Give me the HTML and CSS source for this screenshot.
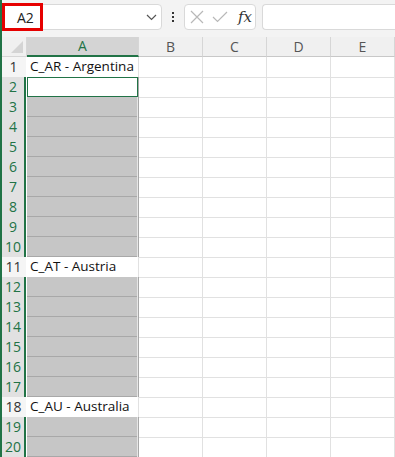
FILE: index.html
```html
<!DOCTYPE html>
<html lang="en">

<head>
    <meta charset="UTF-8">
    <title>Sheet</title>
    <link rel="stylesheet" href="styles.css">
</head>

<body>
    <div class="app">
        <div class="toolbar">
            <div class="name-box">
                <span class="name-text">A2</span>
                <svg class="chevron" width="11" height="7" viewBox="0 0 11 7"><path d="M1 1 L5.5 5.5 L10 1" fill="none" stroke="#555" stroke-width="1.2"/></svg>
                <div class="highlight"></div>
            </div>
            <div class="dots"><span></span><span></span><span></span></div>
            <div class="fx-box">
                <svg width="14" height="14" viewBox="0 0 14 14"><path d="M1 1 L13 13 M13 1 L1 13" stroke="#b8b8b8" stroke-width="1.2" fill="none"/></svg>
                <svg width="16" height="12" viewBox="0 0 16 12"><path d="M1 6 L5.5 10.5 L15 1" stroke="#b8b8b8" stroke-width="1.2" fill="none"/></svg>
                <span class="fx">fx</span>
            </div>
            <div class="formula"></div>
        </div>

        <div class="sheet">
            <div class="row head">
                <div class="corner"><span class="tri"></span></div>
                <div class="ch ch-sel">A</div>
                <div class="ch">B</div>
                <div class="ch">C</div>
                <div class="ch">D</div>
                <div class="ch">E</div>
            </div>
        </div>
    </div>

    <script>
        // rows of the sheet: text in column A, or a selected block
        const labels = { 1: "C_AR - Argentina", 11: "C_AT - Austria", 18: "C_AU - Australia" };
        const blocks = [[2, 10], [12, 17], [19, 20]];
        const sheet = document.querySelector(".sheet");

        for (let r = 1; r <= 20; r++) {
            const block = blocks.find(b => r >= b[0] && r <= b[1]);
            const row = document.createElement("div");
            row.className = "row";

            const rh = document.createElement("div");
            rh.className = "rh" + (block ? " rh-sel" : "");
            rh.textContent = r;
            row.appendChild(rh);

            const a = document.createElement("div");
            a.className = "c col-a";
            if (labels[r]) {
                a.textContent = labels[r];
            } else if (r === 2) {
                a.classList.add("active");
            } else if (block) {
                a.classList.add("sel");
                if (r === block[1]) a.classList.add("sel-bot");
            }
            row.appendChild(a);

            for (let i = 0; i < 4; i++) {
                const c = document.createElement("div");
                c.className = "c";
                row.appendChild(c);
            }
            sheet.appendChild(row);
        }
    </script>
</body>

</html>
```

FILE: styles.css
```css
body {
    margin: 0;
    font-family: "Open Sans", "Noto Sans", sans-serif;
    background: #fff;
    overflow: hidden;
}

.app {
    width: 393px;
    height: 457px;
    border-left: 2px solid #217346;
    overflow: hidden;
}

.toolbar {
    height: 37px;
    background: #f3f3f3;
    display: flex;
    align-items: flex-start;
    padding-top: 4px;
    box-sizing: border-box;
}

.name-box {
    position: relative;
    width: 159px;
    height: 26px;
    margin-left: 1px;
    box-sizing: border-box;
    background: #fff;
    border: 1px solid #d9d9d9;
    border-radius: 4px;
    display: flex;
    align-items: center;
    justify-content: space-between;
    padding: 0 4px 0 13px;
}

.name-text {
    font-size: 14px;
    color: #222;
}

.highlight {
    position: absolute;
    left: -2px;
    top: -2px;
    width: 41px;
    height: 28px;
    border: 3px solid #e60000;
    box-sizing: border-box;
}

.dots {
    width: 22px;
    display: flex;
    flex-direction: column;
    align-items: center;
    gap: 2px;
    padding-top: 8px;
}

.dots span {
    width: 2px;
    height: 2px;
    background: #333;
}

.fx-box {
    width: 72px;
    height: 26px;
    box-sizing: border-box;
    background: #fff;
    border: 1px solid #d9d9d9;
    border-radius: 4px;
    display: flex;
    align-items: center;
    gap: 8px;
    padding-left: 5px;
}

.fx {
    font-family: "DejaVu Serif", "Liberation Serif", serif;
    font-style: italic;
    font-size: 15px;
    color: #333;
    margin-left: 2px;
}

.formula {
    flex: 1;
    height: 26px;
    margin-left: 6px;
    box-sizing: border-box;
    background: #fff;
    border: 1px solid #d9d9d9;
    border-right: none;
    border-radius: 4px 0 0 4px;
}

.row {
    display: grid;
    grid-template-columns: 25px 112px 64px 64px 64px 64px;
    height: 20px;
}

.head {
    background: #f0f0f0;
}

.corner {
    position: relative;
    background: #f0f0f0;
    border-right: 1px solid #d6d6d6;
    border-bottom: 1px solid #d6d6d6;
}

.tri {
    position: absolute;
    right: 3px;
    bottom: 3px;
    width: 0;
    height: 0;
    border-left: 12px solid transparent;
    border-bottom: 12px solid #d4d4d4;
}

.ch {
    font-size: 14px;
    color: #555;
    text-align: center;
    line-height: 19px;
    border-right: 1px solid #d6d6d6;
    border-bottom: 1px solid #c8c8c8;
}

.ch-sel {
    background: #d4d4d4;
    color: #217346;
    border-bottom: 2px solid #217346;
    line-height: 18px;
}

.rh {
    font-size: 14px;
    color: #333;
    text-align: center;
    line-height: 20px;
    background: #f5f5f5;
    border-bottom: 1px solid #dadada;
    box-sizing: border-box;
    padding-right: 2px;
}

.rh-sel {
    background: #e1e1e1;
    color: #217346;
    box-shadow: inset -2px 0 #217346;
    border-right: 1px solid #fff;
}

.c {
    border-right: 1px solid #e1e1e1;
    border-bottom: 1px solid #e1e1e1;
    font-size: 13.5px;
    color: #111;
    line-height: 19px;
    padding-left: 3px;
    white-space: nowrap;
    overflow: hidden;
}

.col-a {
    border-left: 1px solid #fff;
    margin-left: -1px;
}

.active {
    box-shadow: inset 0 0 0 1px #217346;
    border-right-color: #a8a8a8;
}

.sel {
    background: #c6c6c6;
    border-bottom-color: #e6e6e6;
    border-right-color: #a8a8a8;
    box-shadow: inset -1px 0 #e6e6e6, inset 0 -1px #a8a8a8;
}

.sel-bot {
    border-bottom-color: #fff;
}
```
